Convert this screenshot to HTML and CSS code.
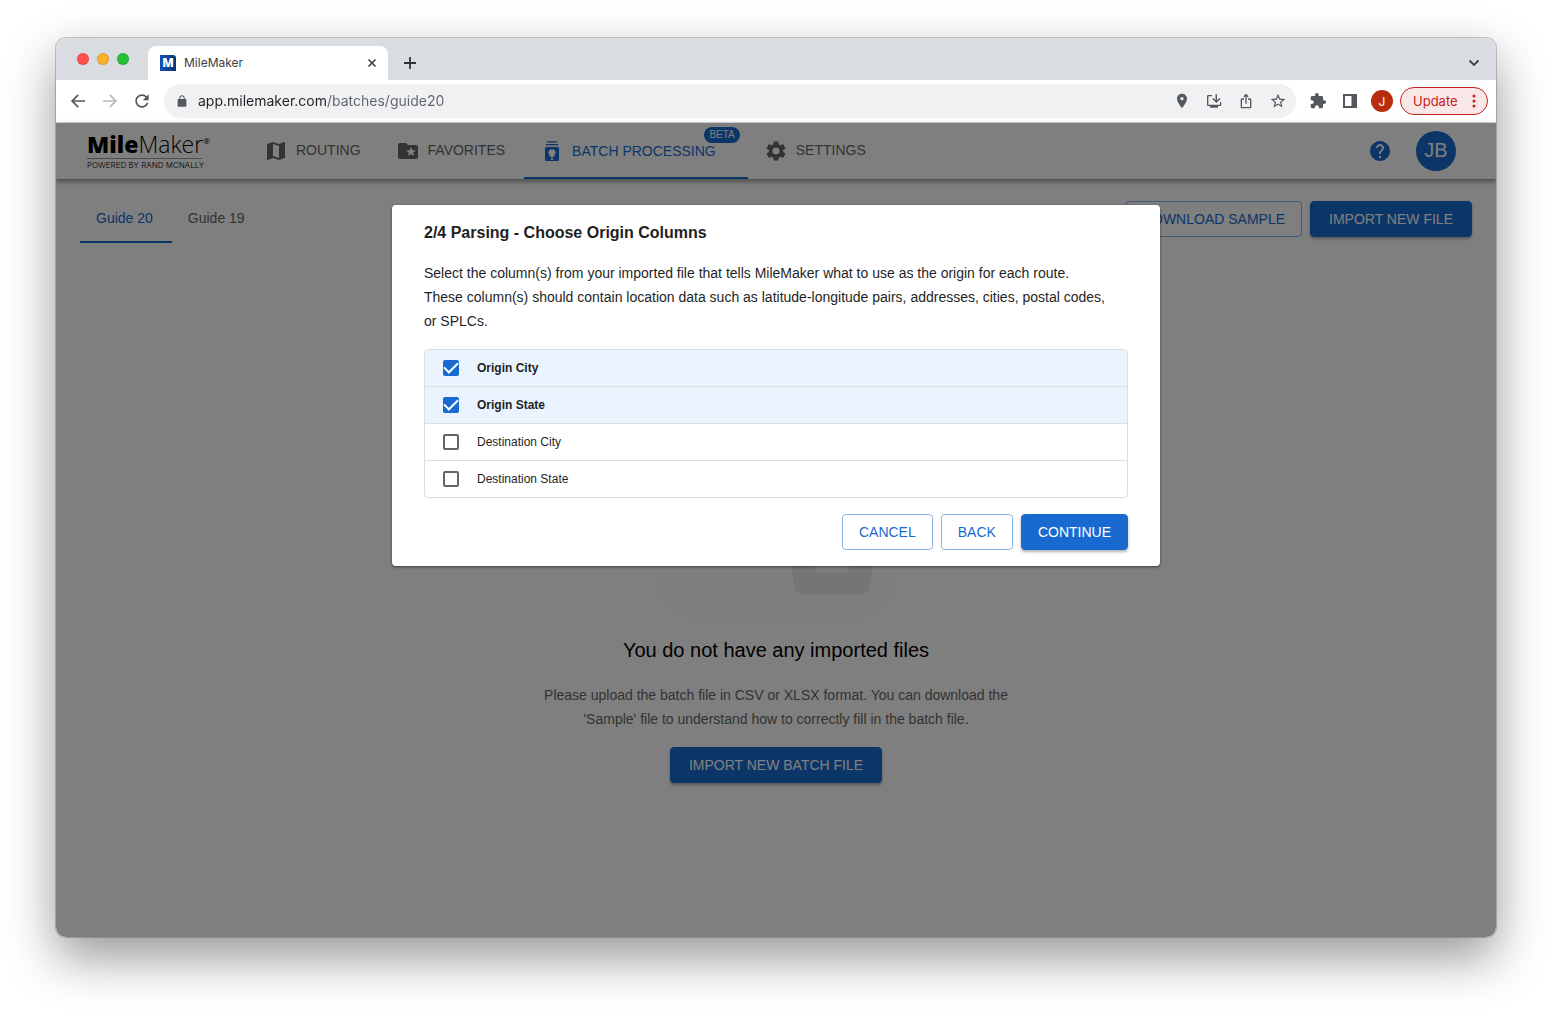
FILE: index.html
```html
<!DOCTYPE html>
<html lang="en">
<head>
    <meta charset="UTF-8">
    <meta name="viewport" content="width=device-width, initial-scale=1.0">
    <title>MileMaker</title>
    <link rel="stylesheet" href="styles.css">
</head>
<body>

    <div class="window">
        <div class="tab-strip">
            <div class="lights">
                <span class="light red"></span>
                <span class="light yellow"></span>
                <span class="light green"></span>
            </div>
            <div class="browser-tab">
                <span class="favicon">M</span>
                <span class="tab-title">MileMaker</span>
                <button class="icon-btn" aria-label="Close tab">
                    <svg width="10" height="10" viewBox="0 0 10 10"><path d="M1.5 1.5l7 7M8.5 1.5l-7 7" stroke="#3c4043" stroke-width="1.6"/></svg>
                </button>
            </div>
            <button class="icon-btn new-tab" aria-label="New tab">
                <svg width="12" height="12" viewBox="0 0 12 12"><path d="M6 0v12M0 6h12" stroke="#303134" stroke-width="1.8"/></svg>
            </button>
            <button class="icon-btn tab-search" aria-label="Search tabs">
                <svg width="12" height="8" viewBox="0 0 12 8"><path d="M1.5 1.5L6 6l4.500-4.500" fill="none" stroke="#3c4043" stroke-width="1.8"/></svg>
            </button>
        </div>

        <div class="toolbar">
            <button class="icon-btn" aria-label="Back">
                <svg width="20" height="20" viewBox="0 0 24 24"><path d="M20.500 11H7.330l5.590-5.590L11.500 4l-8 8 8 8 1.410-1.410L7.330 13H20.500v-2z"/></svg>
            </button>
            <button class="icon-btn faded" aria-label="Forward">
                <svg width="20" height="20" viewBox="0 0 24 24"><path d="M12.500 4l-1.410 1.410L16.670 11H3.500v2h13.170l-5.580 5.590L12.500 20l8-8z"/></svg>
            </button>
            <button class="icon-btn" aria-label="Reload">
                <svg width="20" height="20" viewBox="0 0 24 24"><path d="M17.650 6.350C16.200 4.900 14.210 4 12 4c-4.420 0-7.990 3.580-7.990 8s3.570 8 7.990 8c3.730 0 6.840-2.550 7.730-6h-2.080c-.82 2.330-3.040 4-5.650 4-3.310 0-6-2.690-6-6s2.690-6 6-6c1.660 0 3.140.69 4.220 1.780L13 11h7V4l-2.350 2.350z"/></svg>
            </button>
            <div class="address-bar">
                <svg width="12" height="12" viewBox="1 1 22 21"><path d="M18 8h-1V6c0-2.760-2.240-5-5-5S7 3.240 7 6v2H6c-1.100 0-2 .9-2 2v10c0 1.100.9 2 2 2h12c1.100 0 2-.9 2-2V10c0-1.100-.9-2-2-2zM8.900 8V6c0-1.710 1.390-3.100 3.100-3.100s3.100 1.390 3.100 3.100v2z"/></svg>
                <input class="url" type="text" aria-label="Address" value="app.milemaker.com/batches/guide20">
                <button class="icon-btn" aria-label="Location">
                    <svg width="16" height="16" viewBox="0 0 24 24"><path d="M12 1C7.600 1 4.500 4.400 4.500 8.500c0 5.500 7.500 14 7.500 14s7.500-8.500 7.500-14C19.500 4.400 16.400 1 12 1zm0 10a2.500 2.500 0 0 1 0-5 2.500 2.500 0 0 1 0 5z"/></svg>
                </button>
                <button class="icon-btn" aria-label="Install">
                    <svg width="16" height="16" viewBox="0 0 24 24"><path d="M21 17.500H3.500V5H9V3H3.500c-1.300 0-2 .9-2 2v12.500c0 1.100.9 2 2 2H6V22h12v-2.500h3c1.100 0 2-.9 2-2V14h-2v3.500z"/><path d="M15.500 15l6-6-1.500-1.500-3.500 3.500V2h-2.200v9l-3.300-3.500L9.500 9z"/></svg>
                </button>
                <button class="icon-btn" aria-label="Share">
                    <svg width="16" height="16" viewBox="0 0 24 24"><path d="M16 5l-1.420 1.420-1.590-1.590V16h-1.980V4.830L9.420 6.420 8 5l4-4 4 4zm4 5v11c0 1.100-.9 2-2 2H6c-1.110 0-2-.9-2-2V10c0-1.110.89-2 2-2h3v2H6v11h12V10h-3V8h3c1.100 0 2 .89 2 2z"/></svg>
                </button>
                <button class="icon-btn" aria-label="Bookmark">
                    <svg width="16" height="16" viewBox="1 1 22 22"><path d="M22 9.240l-7.190-.62L12 2 9.190 8.630 2 9.240l5.460 4.730L5.820 21 12 17.270 18.180 21l-1.630-7.030L22 9.240zM12 15.400l-3.760 2.270 1-4.280-3.320-2.880 4.380-.38L12 6.100l1.710 4.040 4.380.38-3.320 2.880 1 4.280L12 15.400z"/></svg>
                </button>
            </div>
            <button class="icon-btn extensions" aria-label="Extensions">
                <svg width="16" height="16" viewBox="1 1 22 22"><path d="M20.500 11H19V7c0-1.100-.9-2-2-2h-4V3.500C13 2.120 11.880 1 10.500 1S8 2.120 8 3.500V5H4c-1.100 0-1.990.9-1.990 2v3.800H3.500c1.490 0 2.700 1.210 2.700 2.700s-1.210 2.700-2.700 2.700H2V20c0 1.100.9 2 2 2h3.800v-1.500c0-1.490 1.210-2.700 2.700-2.700s2.700 1.210 2.700 2.700V22H17c1.100 0 2-.9 2-2v-4h1.500c1.380 0 2.500-1.120 2.500-2.500S21.880 11 20.500 11z"/></svg>
            </button>
            <button class="icon-btn" aria-label="Side panel">
                <svg width="14" height="14" viewBox="0 0 14 14"><path d="M0 0h14v14H0zM2 2v10h6.500V2z" fill-rule="evenodd"/></svg>
            </button>
            <button class="profile" aria-label="Profile">J</button>
            <button class="update">Update
                <svg width="4" height="14" viewBox="0 0 4 14"><circle cx="2" cy="2" r="1.500"/><circle cx="2" cy="7" r="1.500"/><circle cx="2" cy="12" r="1.500"/></svg>
            </button>
        </div>

        <div class="app">
            <header class="app-header">
                <div class="logo">
                    <div class="logo-name"><b>Mile</b>Maker<sup>®</sup></div>
                    <div class="logo-tagline">POWERED BY RAND MCNALLY</div>
                </div>
                <nav class="main-nav">
                    <a class="nav-link" href="#routing">
                        <svg width="24" height="24" viewBox="0 0 24 24"><path d="M20.500 3l-.16.03L15 5.100 9 3 3.360 4.900c-.21.07-.36.25-.36.48V20.500c0 .28.22.5.5.5l.16-.03L9 18.900l6 2.100 5.640-1.900c.21-.07.36-.25.36-.48V3.500c0-.28-.22-.5-.5-.5zM15 19l-6-2.110V5l6 2.110V19z"/></svg>
                        <span>ROUTING</span>
                    </a>
                    <a class="nav-link" href="#favorites">
                        <svg width="24" height="24" viewBox="0 0 24 24"><path d="M20 6h-8l-2-2H4c-1.100 0-1.990.9-1.990 2L2 18c0 1.100.9 2 2 2h16c1.100 0 2-.9 2-2V8c0-1.100-.9-2-2-2zm-2.060 11L15 15.280 12.060 17l.78-3.330-2.590-2.240 3.410-.29L15 8l1.340 3.140 3.410.29-2.590 2.240.78 3.330z"/></svg>
                        <span>FAVORITES</span>
                    </a>
                    <a class="nav-link active" href="#batch">
                        <svg width="24" height="24" viewBox="0 0 24 24"><path d="M7 2.200h10v1.300H7zM5.800 5h12.400v1.300H5.800z"/><path d="M6.500 8h11A1.500 1.500 0 0 1 19 9.500v11a1.500 1.500 0 0 1-1.500 1.500h-11A1.500 1.500 0 0 1 5 20.500v-11A1.500 1.500 0 0 1 6.500 8zM12 10.200a3.600 3.600 0 0 0-3.600 3.600c0 1.300.8 2.100 1.400 2.900.4.500.6 1 .7 1.500h3c.1-.5.3-1 .7-1.500.6-.8 1.400-1.600 1.400-2.900a3.600 3.600 0 0 0-3.600-3.600zM11 19.200V21h2v-1.800z" fill-rule="evenodd"/></svg>
                        BATCH PROCESSING
                        <span class="badge">BETA</span>
                    </a>
                    <a class="nav-link" href="#settings">
                        <svg width="24" height="24" viewBox="0 0 24 24"><path d="M19.140 12.940c.04-.3.06-.61.06-.94 0-.32-.02-.64-.07-.94l2.030-1.580c.18-.14.23-.41.12-.61l-1.920-3.320c-.12-.22-.37-.29-.59-.22l-2.390.96c-.5-.38-1.030-.7-1.620-.94l-.36-2.540c-.04-.24-.24-.41-.48-.41h-3.840c-.24 0-.43.17-.47.41l-.36 2.540c-.59.24-1.130.57-1.620.94l-2.390-.96c-.22-.08-.47 0-.59.22L2.740 8.870c-.12.21-.08.47.12.61l2.030 1.580c-.05.3-.09.63-.09.94s.02.64.07.94l-2.030 1.580c-.18.14-.23.41-.12.61l1.920 3.320c.12.22.37.29.59.22l2.390-.96c.5.38 1.030.7 1.620.94l.36 2.540c.05.24.24.41.48.41h3.840c.24 0 .44-.17.47-.41l.36-2.540c.59-.24 1.130-.56 1.620-.94l2.390.96c.22.08.47 0 .59-.22l1.920-3.320c.12-.22.07-.47-.12-.61l-2.010-1.580zM12 15.600c-1.980 0-3.600-1.620-3.600-3.600s1.620-3.600 3.600-3.600 3.600 1.620 3.600 3.600-1.620 3.600-3.600 3.600z"/></svg>
                        <span>SETTINGS</span>
                    </a>
                </nav>
                <button class="icon-btn help" aria-label="Help">
                    <svg width="24" height="24" viewBox="0 0 24 24"><path d="M12 2C6.480 2 2 6.480 2 12s4.480 10 10 10 10-4.480 10-10S17.520 2 12 2zm1 17h-2v-2h2v2zm2.070-7.750l-.9.92C13.450 12.900 13 13.500 13 15h-2v-.5c0-1.100.45-2.100 1.170-2.830l1.240-1.260c.37-.36.59-.86.59-1.410 0-1.100-.9-2-2-2s-2 .9-2 2H8c0-2.210 1.790-4 4-4s4 1.790 4 4c0 .88-.36 1.680-.93 2.250z"/></svg>
                </button>
                <button class="avatar">JB</button>
            </header>

            <main class="page">
                <div class="page-bar">
                    <nav class="guide-tabs">
                        <a class="guide-tab active" href="#guide20">Guide 20</a>
                        <a class="guide-tab" href="#guide19">Guide 19</a>
                    </nav>
                    <div class="page-actions">
                        <button class="btn outlined">DOWNLOAD SAMPLE</button>
                        <button class="btn filled">IMPORT NEW FILE</button>
                    </div>
                </div>

                <section class="empty">
                    <svg width="240" height="240" viewBox="0 0 240 240">
                        <rect width="240" height="240" rx="38" fill="#f8fefb"/>
                        <path d="M136 120h80v60q0 20-3 29-1 6-8 6-29 2-58 0-7 0-8-6-3-9-3-29z" fill="#e9eaef"/>
                        <rect x="159" y="150" width="34" height="43" rx="4" fill="#f8fefb"/>
                    </svg>
                    <h1>You do not have any imported files</h1>
                    <p>Please upload the batch file in CSV or XLSX format. You can download the<br>'Sample' file to understand how to correctly fill in the batch file.</p>
                    <button class="btn filled">IMPORT NEW BATCH FILE</button>
                </section>
            </main>

            <div class="backdrop">
                <form class="dialog" role="dialog" aria-labelledby="dialog-title">
                    <h2 id="dialog-title">2/4 Parsing - Choose Origin Columns</h2>
                    <p>Select the column(s) from your imported file that tells MileMaker what to use as the origin for each route.<br>These column(s) should contain location data such as latitude-longitude pairs, addresses, cities, postal codes,<br>or SPLCs.</p>
                    <div class="columns">
                        <label class="column"><input type="checkbox" checked><span>Origin City</span></label>
                        <label class="column"><input type="checkbox" checked><span>Origin State</span></label>
                        <label class="column"><input type="checkbox"><span>Destination City</span></label>
                        <label class="column"><input type="checkbox"><span>Destination State</span></label>
                    </div>
                    <div class="dialog-actions">
                        <button type="button" class="btn outlined">CANCEL</button>
                        <button type="button" class="btn outlined">BACK</button>
                        <button type="button" class="btn filled">CONTINUE</button>
                    </div>
                </form>
            </div>
        </div>
    </div>

</body>
</html>
```
FILE: styles.css
```css
* {
    box-sizing: border-box;
}
body {
    display: flex;
    min-height: 100vh;
    margin: 0;
    padding: 38px 56px 75px;
    background-color: #fff;
    font-family: "Liberation Sans", Arial, sans-serif;
    font-size: 14px;
    line-height: 24px;
    color: #1f1f1f;
}
h1, h2, p {
    margin: 0;
}
button {
    font-family: inherit;
    cursor: pointer;
}
a {
    text-decoration: none;
}

/* browser window */
.window {
    flex: 1;
    display: flex;
    flex-direction: column;
    border-radius: 10px;
    overflow: hidden;
    box-shadow: 0 0 0 1px rgba(0,0,0,0.2), 0 20px 50px rgba(0,0,0,0.42);
}
.icon-btn {
    display: flex;
    align-items: center;
    justify-content: center;
    width: 16px;
    padding: 0;
    border: none;
    background: none;
}
.tab-strip {
    display: flex;
    align-items: center;
    height: 42px;
    padding: 8px 14px 0 21px;
    background-color: #d9dce1;
}
.lights {
    display: flex;
    gap: 8px;
    margin: 0 19px 8px 0;
}
.light {
    width: 12px;
    height: 12px;
    border-radius: 50%;
    border: 1px solid rgba(0,0,0,0.12);
}
.red {
    background-color: #ff5350;
}
.yellow {
    background-color: #fdb12b;
}
.green {
    background-color: #27c138;
}
.browser-tab {
    display: flex;
    align-items: center;
    gap: 8px;
    width: 240px;
    height: 34px;
    padding: 0 8px 0 12px;
    border-radius: 8px 8px 0 0;
    background-color: #fff;
    font-family: Inter, sans-serif;
    font-size: 12px;
}
.favicon {
    width: 16px;
    height: 16px;
    border-radius: 0 3px 0 0;
    background: linear-gradient(90deg, #1150b8, #0b3575);
    color: #fff;
    font: 800 12px/16px "Open Sans", sans-serif;
    text-align: center;
}
.tab-title {
    flex: 1;
    color: #3c4043;
}
.new-tab {
    margin-left: 14px;
}
.tab-search {
    margin-left: auto;
}
.toolbar {
    display: flex;
    align-items: center;
    gap: 16px;
    height: 43px;
    padding: 0 8px 0 14px;
    border-bottom: 1px solid #d9dadc;
    background-color: #fff;
    font-family: Inter, sans-serif;
}
.toolbar svg {
    flex: none;
    fill: #54575b;
}
.toolbar .faded svg {
    fill: #b9bbbd;
}
.address-bar {
    flex: 1;
    display: flex;
    align-items: center;
    gap: 16px;
    height: 34px;
    margin-left: -2px;
    padding: 0 10px 0 12px;
    border-radius: 17px;
    background-color: #f0f1f3;
}
/* host in dark, path in grey */
.url {
    flex: 1;
    min-width: 0;
    height: 22px;
    margin-left: -6px;
    padding: 0 0 2px;
    border: none;
    outline: none;
    background: linear-gradient(90deg, #202124 129px, #5f6368 129px);
    -webkit-background-clip: text;
    background-clip: text;
    color: transparent;
    font-family: inherit;
    font-size: 14px;
}
.extensions {
    margin-left: -2px;
}
.profile {
    width: 22px;
    height: 22px;
    margin: 0 -8px 0 -3px;
    padding: 0;
    border: none;
    border-radius: 50%;
    background-color: #b92d0f;
    color: #fff;
    font-size: 12px;
}
.update {
    display: flex;
    align-items: center;
    justify-content: space-between;
    width: 88px;
    height: 28px;
    margin-left: -1px;
    padding: 0 11px 0 12px;
    border: 1px solid #c5221f;
    border-radius: 14px;
    background-color: #f9e8e7;
    color: #c5221f;
    font-size: 13px;
}
.toolbar .update svg {
    fill: #c5221f;
}

/* application */
.app {
    position: relative;
    flex: 1;
    background-color: #fff;
}
.app-header {
    display: flex;
    align-items: center;
    height: 56px;
    padding: 0 40px 0 31px;
    box-shadow: 0 2px 4px rgba(0,0,0,0.3), 0 3px 8px rgba(0,0,0,0.2);
}
.logo {
    width: 161px;
    color: #000;
    font-family: "Open Sans", sans-serif;
}
.logo-name {
    font-size: 23px;
    font-weight: 300;
    line-height: 27px;
    white-space: nowrap;
}
.logo-name b {
    font-weight: 800;
}
.logo-name sup {
    font-size: 8px;
    font-weight: 400;
    line-height: 8px;
    vertical-align: 9px;
}
.logo-tagline {
    width: 115px;
    border-top: 1px solid #999;
    font: 300 8px/12px Inter, sans-serif;
    white-space: nowrap;
}
.main-nav {
    flex: 1;
    display: flex;
    align-self: stretch;
}
.nav-link {
    position: relative;
    display: flex;
    align-items: center;
    gap: 8px;
    padding: 0 19px 0 16px;
    color: #666;
}
.nav-link span {
    margin-bottom: 2px;
}
.nav-link svg {
    fill: #666;
}
.nav-link.active {
    padding-right: 32px;
    border-bottom: 2px solid #186ad0;
    padding-top: 2px;
    color: #186ad0;
}
.nav-link.active svg, .help svg {
    fill: #186ad0;
}
.badge {
    position: absolute;
    top: 4px;
    right: 8px;
    padding: 0 5px;
    border-radius: 8px;
    background-color: #186ad0;
    color: #fff;
    font-size: 10px;
    line-height: 16px;
}
.help {
    width: 24px;
    margin-right: 24px;
}
.avatar {
    width: 40px;
    height: 40px;
    padding: 0 0 2px;
    border: none;
    border-radius: 50%;
    background-color: #186ad0;
    color: #fff;
    font-size: 20px;
}
.page {
    padding: 0 24px;
}
.page-bar {
    display: flex;
    justify-content: space-between;
    align-items: center;
    height: 64px;
    padding-top: 16px;
}
.guide-tabs {
    display: flex;
    align-self: stretch;
}
.guide-tab {
    padding: 11px 19px 11px 16px;
    color: #666;
}
.guide-tab.active {
    border-bottom: 2px solid #186ad0;
    color: #186ad0;
}
.page-actions {
    display: flex;
    gap: 8px;
}
.btn {
    height: 36px;
    padding: 0 18px;
    border: 1px solid #186ad0;
    border-radius: 4px;
    font-size: 14px;
    line-height: 24px;
}
.filled {
    background-color: #186ad0;
    color: #fff;
    box-shadow: 0 2px 3px rgba(0,0,0,0.3);
}
.outlined {
    padding: 0 16px;
    border-color: #8bb4e7;
    background-color: #fff;
    color: #186ad0;
}
.empty {
    display: flex;
    flex-direction: column;
    align-items: center;
    padding-top: 136px;
    text-align: center;
}
.empty h1 {
    margin: 15px 0;
    color: #000;
    font-size: 20px;
    font-weight: normal;
    line-height: 32px;
}
.empty p {
    margin: 2px 0 16px;
    color: #666;
}

/* dialog */
.backdrop {
    position: absolute;
    inset: 0;
    display: flex;
    justify-content: center;
    align-items: flex-start;
    padding-top: 82px;
    background-color: rgba(0,0,0,0.5);
}
.dialog {
    width: 768px;
    max-width: 100%;
    padding: 16px 32px;
    border-radius: 4px;
    background-color: #fff;
    box-shadow: 0 1px 3px rgba(0,0,0,0.5);
}
.dialog h2 {
    margin-bottom: 16px;
    font-size: 16px;
    line-height: 24px;
}
.dialog p {
    margin-bottom: 16px;
}
.columns {
    border: 1px solid #dedede;
    border-radius: 4px;
    overflow: hidden;
}
.column {
    display: flex;
    align-items: center;
    gap: 18px;
    height: 37px;
    padding-left: 18px;
    border-bottom: 1px solid #dedede;
    font-size: 12px;
}
.column:last-child {
    height: 36px;
    border-bottom: none;
}
.column:has(:checked) {
    background-color: #e9f4fe;
    font-weight: bold;
}
.column input {
    appearance: none;
    display: flex;
    justify-content: center;
    width: 16px;
    height: 16px;
    margin: 0;
    border: 2px solid #666;
    border-radius: 2px;
}
.column input:checked {
    border-color: #186ad0;
    background-color: #186ad0;
}
.column input:checked::before {
    content: "";
    flex: none;
    width: 12px;
    height: 6px;
    border: solid #fff;
    border-width: 0 0 2px 2px;
    transform: rotate(-45deg);
}
.dialog-actions {
    display: flex;
    justify-content: flex-end;
    gap: 8px;
    margin-top: 16px;
}
.dialog-actions .filled {
    padding: 0 16px;
}
```
